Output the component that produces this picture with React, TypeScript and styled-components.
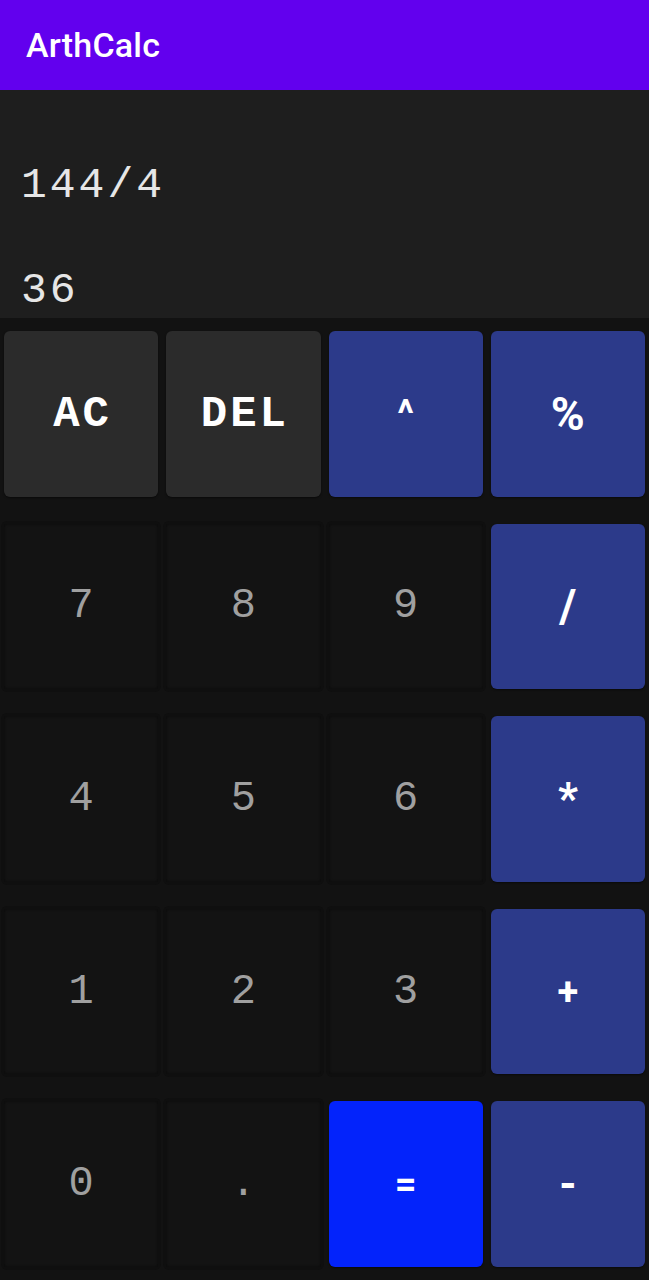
import React from "react";
import styled, { createGlobalStyle } from "styled-components";

const Global = createGlobalStyle`
  html, body { margin: 0; padding: 0; background: #121212; }
  body { width: 649px; height: 1280px; overflow: hidden; }
  * { box-sizing: border-box; }
`;

const Screen = styled.div`
  width: 649px;
  height: 1280px;
  display: flex;
  flex-direction: column;
  background: #121212;
`;

const AppBar = styled.header`
  height: 90px;
  flex: none;
  background: #6200ee;
  display: flex;
  align-items: center;
  padding-left: 26px;
`;

const Title = styled.h1`
  margin: 0;
  font-family: Roboto, "Noto Sans", sans-serif;
  font-weight: 500;
  font-size: 34px;
  color: #ffffff;
  letter-spacing: 0.2px;
`;

const Display = styled.section`
  height: 228px;
  flex: none;
  background: #1e1e1e;
  display: flex;
  flex-direction: column;
  padding: 69px 0 0 21px;
  gap: 51px;
  overflow: hidden;
`;

const Line = styled.div`
  font-family: "Liberation Mono", "DejaVu Sans Mono", monospace;
  font-size: 43px;
  font-weight: 300;
  line-height: 54px;
  height: 54px;
  letter-spacing: 3px;
  color: #e6e6e6;
  white-space: nowrap;
`;

const Keypad = styled.div`
  flex: 1;
  display: grid;
  grid-template-columns: repeat(4, 1fr);
  grid-template-rows: repeat(5, 1fr);
  column-gap: 8px;
  row-gap: 27px;
  padding: 13px 4px;
`;

type Kind = "util" | "digit" | "op" | "equal";

const bg: Record<Kind, string> = {
  util: "#2b2b2b",
  digit: "#131313",
  op: "#2c3a8a",
  equal: "#0323fb",
};

const Key = styled.button<{ $kind: Kind; $size?: number }>`
  border: none;
  margin: 0;
  padding: 0;
  border-radius: ${(p) => (p.$kind === "digit" ? "3px" : "6px")};
  background: ${(p) => bg[p.$kind]};
  box-shadow: ${(p) =>
    p.$kind === "digit"
      ? "0 0 0 3px #0f0f0f, inset 0 0 3px rgba(0,0,0,0.5)"
      : "0 1px 2px rgba(0,0,0,0.5)"};
  display: flex;
  align-items: center;
  justify-content: center;
  color: ${(p) => (p.$kind === "digit" ? "#a0a0a0" : "#ffffff")};
  font-family: ${(p) =>
    p.$kind === "op" || p.$kind === "equal"
      ? 'Roboto, "Noto Sans", sans-serif'
      : '"Liberation Mono", "DejaVu Sans Mono", monospace'};
  font-weight: ${(p) => (p.$kind === "digit" ? 400 : 700)};
  font-size: ${(p) =>
    p.$size
      ? `${p.$size}px`
      : p.$kind === "util"
      ? "44px"
      : p.$kind === "digit"
      ? "42px"
      : "38px"};
  letter-spacing: ${(p) => (p.$kind === "util" ? "3px" : "0")};
  text-indent: ${(p) => (p.$kind === "util" ? "3px" : "0")};
`;

const keys: { label: string; kind: Kind; size?: number }[] = [
  { label: "AC", kind: "util" },
  { label: "DEL", kind: "util" },
  { label: "^", kind: "op" },
  { label: "%", kind: "op", size: 46 },
  { label: "7", kind: "digit" },
  { label: "8", kind: "digit" },
  { label: "9", kind: "digit" },
  { label: "/", kind: "op", size: 46 },
  { label: "4", kind: "digit" },
  { label: "5", kind: "digit" },
  { label: "6", kind: "digit" },
  { label: "*", kind: "op", size: 44 },
  { label: "1", kind: "digit" },
  { label: "2", kind: "digit" },
  { label: "3", kind: "digit" },
  { label: "+", kind: "op" },
  { label: "0", kind: "digit" },
  { label: ".", kind: "digit" },
  { label: "=", kind: "equal" },
  { label: "-", kind: "op", size: 44 },
];

export default function App() {
  return (
    <Screen>
      <Global />
      <AppBar>
        <Title>ArthCalc</Title>
      </AppBar>
      <Display>
        <Line>144/4</Line>
        <Line>36</Line>
      </Display>
      <Keypad>
        {keys.map((k) => (
          <Key key={k.label} $kind={k.kind} $size={k.size}>
            {k.label}
          </Key>
        ))}
      </Keypad>
    </Screen>
  );
}
